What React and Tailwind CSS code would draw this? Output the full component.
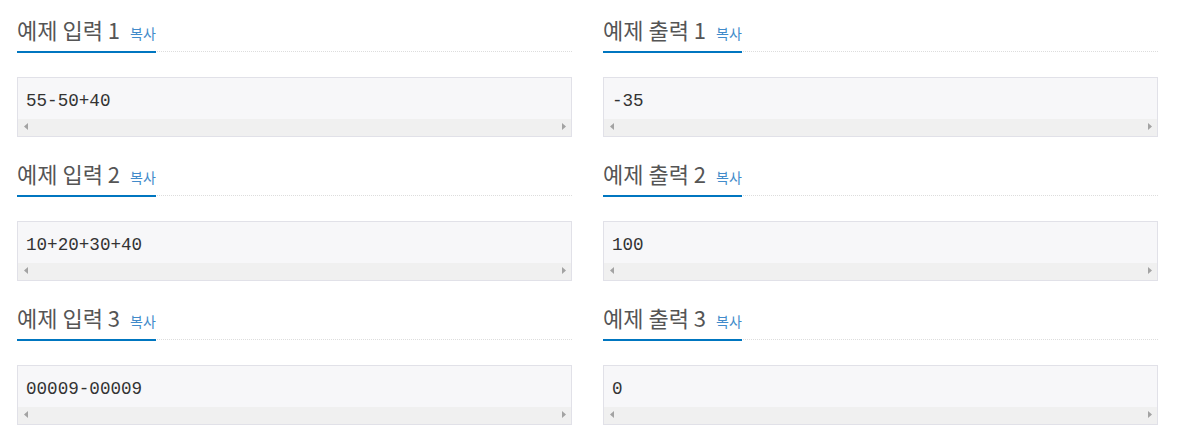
import React from "react";

const rows = [
  ["55-50+40", "-35"],
  ["10+20+30+40", "100"],
  ["00009-00009", "0"],
];

function Headline({ title }) {
  return (
    <div className="flex h-[52px] items-end border-b border-dotted border-[#dddddd]">
      <div className="-mb-[2px] h-[53px] border-b-2 border-[#0076c0] pt-[18px] pb-[10px] leading-[23px] whitespace-nowrap">
        <span className="text-[22px] text-[#555555]">{title}</span>
        <span className="ml-[10px] text-[14px] leading-none text-[#428bca]">복사</span>
      </div>
    </div>
  );
}

function Box({ text }) {
  return (
    <div className="mt-[25px] border border-[#e1e1e8] bg-[#f7f7f9]">
      <div
        className="h-[41px] pl-[8px] pt-[13px] text-[17.6px] leading-[20px] text-[#333333] whitespace-pre"
        style={{ fontFamily: '"Liberation Mono", "DejaVu Sans Mono", monospace' }}
      >
        {text}
      </div>
      <div className="flex h-[17px] items-center justify-between bg-[#f0f0f0] pl-[6px] pr-[5px] pb-[2px]">
        <svg width="4" height="7" viewBox="0 0 4 7">
          <path d="M4 0 L0 3.5 L4 7 Z" fill="#a3a3a3" />
        </svg>
        <svg width="4" height="7" viewBox="0 0 4 7">
          <path d="M0 0 L4 3.5 L0 7 Z" fill="#a3a3a3" />
        </svg>
      </div>
    </div>
  );
}

export default function App() {
  return (
    <div
      className="w-[1199px] h-[445px] bg-white pl-[17px]"
      style={{ fontFamily: '"Noto Sans CJK KR", "Noto Sans", sans-serif' }}
    >
      <div className="flex flex-col gap-[7px]">
        {rows.map(([inp, out], i) => (
          <div key={i} className="flex gap-[31px]">
            <div className="w-[555px]">
              <Headline title={`예제 입력 ${i + 1}`} />
              <Box text={inp} />
            </div>
            <div className="w-[555px]">
              <Headline title={`예제 출력 ${i + 1}`} />
              <Box text={out} />
            </div>
          </div>
        ))}
      </div>
    </div>
  );
}
